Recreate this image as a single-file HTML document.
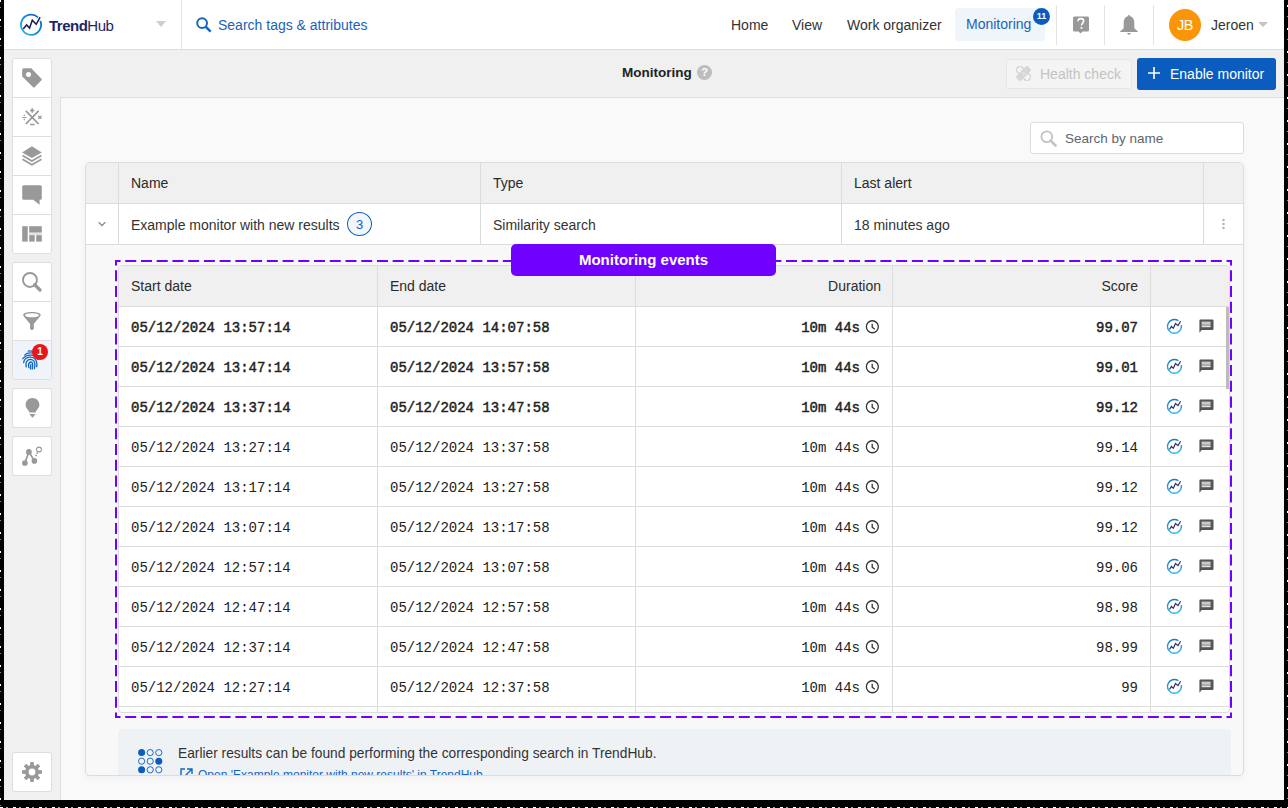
<!DOCTYPE html>
<html><head><meta charset="utf-8">
<style>
*{box-sizing:border-box;margin:0;padding:0}
html,body{width:1288px;height:808px;overflow:hidden;background:#000}
body{position:relative;font-family:"Liberation Sans",sans-serif;color:#333;font-size:14px}
.a{position:absolute}
#app{position:absolute;left:4px;top:0;width:1280px;height:800px;background:#f0f0f0;overflow:hidden}
#hdr{position:absolute;left:0;top:0;width:1280px;height:50px;background:#fff;border-bottom:1px solid #dcdcdc}
.t{position:absolute;white-space:nowrap;line-height:1}
.vsep{position:absolute;top:0;width:1px;background:#e3e3e3}
.sbox{position:absolute;left:8px;width:40px;background:#fff;border:1px solid #dedede;border-radius:3px;overflow:hidden}
.scell{position:relative;height:39px;border-top:1px solid #dedede}
.scell:first-child{border-top:none;height:38px}
.scell svg{position:absolute;left:9px;top:9px}
#content{position:absolute;left:56px;top:97px;width:1230px;height:710px;background:#f9f9f9;border-left:1px solid #dedede;border-top:1px solid #dedede}
#card{position:absolute;left:81px;top:162px;width:1159px;height:614px;background:#f8f8f8;box-shadow:0 2px 6px rgba(0,0,0,0.04);border:1px solid #dcdcdc;border-radius:5px;overflow:hidden}
.mono{font-family:"Liberation Mono",monospace}
</style></head><body>
<div class="a" style="left:0;top:0;width:1px;height:808px;background:repeating-linear-gradient(180deg,#fff 0 2px,#000 2px 7px,#888 7px 8px,#000 8px 19px)"></div>
<div class="a" style="left:1287px;top:0;width:1px;height:808px;background:repeating-linear-gradient(180deg,#000 0 5px,#fff 5px 7px,#000 7px 16px,#999 16px 17px,#000 17px 23px)"></div>
<div class="a" style="left:0;top:807px;width:1288px;height:1px;background:repeating-linear-gradient(90deg,#fff 0 3px,#000 3px 6px,#aaa 6px 8px,#000 8px 13px)"></div>
<div id="app">
  <!-- header -->
  <div id="hdr">
    <svg class="a" style="left:15px;top:13px" width="24" height="24" viewBox="0 0 24 24">
      <defs><linearGradient id="lg" x1="1" y1="0" x2="0" y2="1"><stop offset="0" stop-color="#0a5cc0"/><stop offset="1" stop-color="#22b8ea"/></linearGradient></defs>
      <path d="M21.3 7.82A10.05 10.05 0 1 1 18.9 4.4" fill="none" stroke="url(#lg)" stroke-width="1.8"/>
      <path d="M4.2 15.9L7.6 11.9L10.55 15L13.3 7.2L17.2 11.3L21.1 4.2" fill="none" stroke="#1c1a5a" stroke-width="1.5" stroke-linejoin="miter"/>
    </svg>
    <div class="t" style="left:45px;top:18px;font-size:15px;color:#1e2466;letter-spacing:-0.5px"><b>Trend</b>Hub</div>
    <svg class="a" style="left:152px;top:21px" width="10" height="6"><path d="M0 0H10L5 6Z" fill="#cfcfcf"/></svg>
    <div class="vsep" style="left:177px;height:49px"></div>
    <svg class="a" style="left:192px;top:17px" width="16" height="16" viewBox="0 0 16 16"><circle cx="6.1" cy="6.1" r="4.9" fill="none" stroke="#1565c0" stroke-width="2"/><path d="M9.6 9.6L14.6 14.6" stroke="#1565c0" stroke-width="2.5"/></svg>
    <div class="t" style="left:214px;top:18px;color:#1a62b8">Search tags &amp; attributes</div>

    <div class="t" style="left:727px;top:18px;color:#333">Home</div>
    <div class="t" style="left:788px;top:18px;color:#333">View</div>
    <div class="t" style="left:843px;top:18px;color:#333">Work organizer</div>
    <div class="a" style="left:951px;top:8px;width:90px;height:33px;background:#f0f5fb;border-radius:4px"></div>
    <div class="t" style="left:962px;top:17px;color:#1a62b8">Monitoring</div>
    <div class="a" style="left:1029px;top:8px;width:17px;height:17px;border-radius:50%;background:#0b5cbf;color:#fff;font-size:9px;text-align:center;line-height:17px;font-weight:700">11</div>
    <div class="vsep" style="left:1052px;top:5px;height:40px"></div>
    <svg class="a" style="left:1069px;top:16px" width="16" height="19" viewBox="0 0 16 19"><path d="M1.5 0.6H14.5A1.5 1.5 0 0 1 16 2.1V13.9A1.5 1.5 0 0 1 14.5 15.4H9.5L7.5 17.5L5.5 15.4H1.5A1.5 1.5 0 0 1 0 13.9V2.1A1.5 1.5 0 0 1 1.5 0.6Z" fill="#999"/><path d="M5 5.3C5 3.6 6.2 2.6 7.8 2.6C9.4 2.6 10.7 3.6 10.7 5.1C10.7 6.9 8.5 7.2 8.5 9.4" fill="none" stroke="#fff" stroke-width="1.6"/><rect x="7.6" y="11" width="1.8" height="1.8" fill="#fff"/></svg>
    <div class="vsep" style="left:1100px;top:5px;height:40px"></div>
    <svg class="a" style="left:1116px;top:14px" width="18" height="22" viewBox="0 0 18 22"><path d="M9 0.9C9.6 0.9 10 1.5 10.2 2.3C13 3.1 14.3 5.4 14.3 8.5V14.3L17.9 17.5V17.9H0.1V17.5L3.7 14.3V8.5C3.7 5.4 5 3.1 7.8 2.3C8 1.5 8.4 0.9 9 0.9Z" fill="#999"/><path d="M6.8 19H11.2L9 21Z" fill="#999"/></svg>
    <div class="vsep" style="left:1149px;top:5px;height:40px"></div>
    <div class="a" style="left:1165px;top:9px;width:32px;height:32px;border-radius:50%;background:#f99507;color:#fff;font-size:14.5px;text-align:center;line-height:32px;letter-spacing:-0.5px">JB</div>
    <div class="t" style="left:1207px;top:18px;color:#333">Jeroen</div>
    <svg class="a" style="left:1254px;top:22px" width="10" height="5"><path d="M0 0H10L5 5Z" fill="#c4c4c4"/></svg>
  </div>

  <!-- subheader -->
  <div class="t" style="left:618px;top:66px;font-weight:700;color:#222;font-size:13.5px">Monitoring</div>
  <div class="a" style="left:693px;top:65px;width:15px;height:15px;border-radius:50%;background:#bdbdbd;color:#fff;font-size:11px;font-weight:700;text-align:center;line-height:15px">?</div>
  <div class="a" style="left:1002px;top:59px;width:126px;height:30px;background:#f4f4f4;border:1px solid #e6e6e6;border-radius:3px"></div>
  <svg class="a" style="left:1012px;top:66px" width="15" height="15" viewBox="0 0 15 15"><g fill="none" stroke="#d6d6d6" stroke-width="1.5"><rect x="4.2" y="-0.8" width="6.6" height="16.6" rx="2.2" transform="rotate(-45 7.5 7.5)"/></g><rect x="4.2" y="-0.8" width="6.6" height="16.6" rx="2.2" fill="#d6d6d6" transform="rotate(45 7.5 7.5)"/><g fill="#f2f2f2"><circle cx="6.3" cy="7.5" r=".55"/><circle cx="8.7" cy="7.5" r=".55"/><circle cx="7.5" cy="6.3" r=".55"/><circle cx="7.5" cy="8.7" r=".55"/></g></svg>
  <div class="t" style="left:1036px;top:67px;color:#c3c3c3">Health check</div>
  <div class="a" style="left:1133px;top:58px;width:139px;height:32px;background:#0b5cbf;border-radius:3px"></div>
  <svg class="a" style="left:1144px;top:67px" width="12" height="12"><path d="M6 0V12M0 6H12" stroke="#fff" stroke-width="1.6"/></svg>
  <div class="t" style="left:1166px;top:67px;color:#fff">Enable monitor</div>

  <!-- sidebar -->
  <div id="sidebar"><div class="sbox" style="top:58px;height:196px"><div class="scell" style=""><svg width="20" height="20" viewBox="0 0 20 20"><path fill="#999" d="M1.7 0.2H9.3L19.2 10.4A1.4 1.4 0 0 1 19.2 12.4L12.9 18.9A1.4 1.4 0 0 1 10.9 18.9L0.2 8.6V1.7A1.5 1.5 0 0 1 1.7 0.2Z"/><circle cx="6.5" cy="6.5" r="2.5" fill="#fff"/></svg></div><div class="scell" style=""><svg width="20" height="20" viewBox="0 0 20 20"><g stroke="#999" fill="none"><path d="M3.9 3.8L16.6 17M16.6 3.8L3.9 17" stroke-width="1.8"/><path d="M10.2 1.3V5.7M8 3.5H12.4" stroke-width="1.5"/><path d="M8.1 17.5H12.6" stroke-width="1.4"/><path d="M0.2 10.5H4.5" stroke-width="1.2"/><path d="M16.3 8.9L19.5 11.7M19.5 8.9L16.3 11.7" stroke-width="1.3"/></g><circle cx="2.3" cy="8.3" r=".8" fill="#999"/><circle cx="2.3" cy="12.6" r=".8" fill="#999"/></svg></div><div class="scell" style=""><svg width="20" height="20" viewBox="0 0 20 20"><path fill="#999" d="M9.9 0.2L19.8 6.5L9.9 12.1L0.1 6.5Z"/><path fill="none" stroke="#999" stroke-width="1.7" d="M0.6 9.4L9.9 14.9L19.4 9.4M0.5 13.3L9.9 18.8L19.5 13.3"/></svg></div><div class="scell" style=""><svg width="20" height="20" viewBox="0 0 20 20"><path fill="#999" d="M1.7 0.2H18.3A1.5 1.5 0 0 1 19.8 1.7V13.3A1.5 1.5 0 0 1 18.3 14.8H17.6V19.8L11.1 14.8H1.7A1.5 1.5 0 0 1 0.2 13.3V1.7A1.5 1.5 0 0 1 1.7 0.2Z"/></svg></div><div class="scell" style=""><svg width="20" height="20" viewBox="0 0 20 20"><g fill="#999"><rect x="0.2" y="2.2" width="5.5" height="15.4"/><rect x="7.2" y="2.2" width="12.6" height="6.5"/><rect x="7.2" y="11.1" width="5.5" height="6.5"/><rect x="14.2" y="11.1" width="5.6" height="6.5"/></g><rect x="7.2" y="8.7" width="12.6" height="2.4" fill="#e3e3e3"/></svg></div></div><div class="sbox" style="top:262px;height:118px"><div class="scell" style=""><svg width="20" height="20" viewBox="0 0 20 20"><circle cx="7.95" cy="7.95" r="7" fill="none" stroke="#999" stroke-width="1.9"/><path d="M12.6 12.6L18 18" stroke="#999" stroke-width="3.2" stroke-linecap="round"/></svg></div><div class="scell" style=""><svg width="20" height="20" viewBox="0 0 20 20"><path fill="#999" d="M1.1 4C1.1 2.3 5.1 1 9.95 1S18.8 2.3 18.8 4C18.8 5 12.8 11.5 11.8 12.9V17.5C11.8 18.5 11 18.9 9.95 18.9S8.1 18.5 8.1 17.5V12.9C7.1 11.5 1.1 5 1.1 4Z"/><ellipse cx="9.95" cy="4.2" rx="7.05" ry="2.05" fill="#fff"/></svg></div><div class="scell" style="background:#eef4fa;"><svg width="20" height="20" viewBox="0 0 20 20"><g fill="none" stroke="#1565c0" stroke-width="1.3" stroke-linecap="round"><path d="M6.2 1.2C7.3 0.9 9 0.9 10.6 1.4"/><path d="M2.6 5.1C4.5 3.3 7.5 2.6 10.3 3.2"/><path d="M0.8 8.7C3 6 6.8 4.7 10.5 5.3C13.5 5.8 15.2 7.8 15.8 9.5"/><path d="M1.6 12.5C2.2 9.5 4.5 7.3 7.8 7.1C11.4 6.9 14.2 9.3 14.8 13C15 14.5 14.9 15.7 14.7 16.6"/><path d="M4.3 16.8C3.7 14.3 4 11.7 5.8 10.3C8 8.6 11.6 9.3 12.6 12.4C13.2 14.3 12.8 17 12.4 18.6"/><path d="M6.9 17.6C6.3 15.5 6.5 13.5 7.6 12.5C8.8 11.5 10.3 12.1 10.6 13.8C10.9 15.5 10.6 17.4 10.2 19.2"/><path d="M8.8 14.5C8.8 16 8.7 17.5 8.4 18.8"/></g></svg></div></div><div class="a" style="left:28px;top:344px;width:16px;height:16px;border-radius:50%;background:#e8151b;color:#fff;font-size:10px;font-weight:700;text-align:center;line-height:16px">1</div><div class="sbox" style="top:388px;height:40px"><div class="scell" style=""><svg width="20" height="20" viewBox="0 0 20 20"><path fill="#999" d="M10.5 0.1C14.3 0.1 17.4 3 17.4 6.8C17.4 9.3 16 10.8 14.7 12.2C14 12.9 13.7 13.6 13.7 14.6H7.2C7.2 13.6 6.9 12.9 6.2 12.2C4.9 10.8 3.6 9.3 3.6 6.8C3.6 3 6.7 0.1 10.5 0.1Z"/><path fill="#999" d="M7.2 16H13.7L10.45 19.7Z"/></svg></div></div><div class="sbox" style="top:436px;height:40px"><div class="scell" style=""><svg width="20" height="20" viewBox="0 0 20 20"><g stroke="#999" stroke-width="1.7" fill="none"><path d="M2.9 17L6.9 5.9L12.4 14.9"/><path d="M13.8 10.2L15.6 6.3" stroke-dasharray="1.4 1.3"/></g><circle cx="2.9" cy="17" r="2.85" fill="#999"/><circle cx="6.9" cy="5.9" r="2.9" fill="#999"/><circle cx="12.4" cy="14.9" r="2.8" fill="#999"/><circle cx="17" cy="3.5" r="2.4" fill="#fff" stroke="#999" stroke-width="1.1"/></svg></div></div><div class="sbox" style="top:752px;height:40px"><div class="scell" style=""><svg width="20" height="20" viewBox="0 0 20 20"><g fill="#999"><rect x="8.15" y="0.1" width="3.7" height="19.8"/><rect x="8.15" y="0.1" width="3.7" height="19.8" transform="rotate(45 10 10)"/><rect x="8.15" y="0.1" width="3.7" height="19.8" transform="rotate(90 10 10)"/><rect x="8.15" y="0.1" width="3.7" height="19.8" transform="rotate(135 10 10)"/><circle cx="10" cy="10" r="7"/></g><circle cx="10" cy="10" r="3.4" fill="#fff"/></svg></div></div></div>

  <!-- content -->
  <div id="content"></div>
  <div class="a" style="left:1026px;top:122px;width:214px;height:32px;background:#fff;border:1px solid #dcdcdc;border-radius:3px"></div>
  <svg class="a" style="left:1036px;top:130px" width="17" height="17" viewBox="0 0 17 17"><circle cx="6.8" cy="6.8" r="5.4" fill="none" stroke="#c2c2c2" stroke-width="1.8"/><path d="M10.8 10.8L15.5 15.5" stroke="#c2c2c2" stroke-width="2.6" stroke-linecap="round"/></svg>
  <div class="t" style="left:1061px;top:131.5px;color:#5d6570;font-size:13.5px">Search by name</div>
  <div id="card"><svg width="0" height="0" style="position:absolute"><defs><linearGradient id="cg" x1="0" y1="0" x2="0" y2="1"><stop offset="0" stop-color="#1b7bd0"/><stop offset="1" stop-color="#29b8ea"/></linearGradient></defs></svg><div class="a" style="left:0;top:0;width:1157px;height:41px;background:#f0f0f0;border-bottom:1px solid #dcdcdc"></div><div class="a" style="left:0;top:41px;width:1157px;height:41px;background:#fff;border-bottom:1px solid #dcdcdc"></div><div class="a" style="left:32px;top:0;width:1px;height:82px;background:#dcdcdc"></div><div class="a" style="left:394px;top:0;width:1px;height:82px;background:#dcdcdc"></div><div class="a" style="left:755px;top:0;width:1px;height:82px;background:#dcdcdc"></div><div class="a" style="left:1117px;top:0;width:1px;height:82px;background:#dcdcdc"></div><div class="t" style="left:45px;top:13px;color:#2b2b2b">Name</div><div class="t" style="left:407px;top:13px;color:#2b2b2b">Type</div><div class="t" style="left:768px;top:13px;color:#2b2b2b">Last alert</div><svg class="a" style="left:12px;top:58px" width="8" height="6"><path d="M0.7 1.2L4 4.5L7.3 1.2" fill="none" stroke="#8c8c8c" stroke-width="1.3"/></svg><div class="t" style="left:45px;top:54.5px;color:#333">Example monitor with new results</div><div class="a" style="left:261px;top:49px;width:25px;height:24px;border:1.5px solid #0e60c0;background:#f3f7fb;border-radius:50%;color:#0e60c0;font-size:13px;text-align:center;line-height:23px">3</div><div class="t" style="left:407px;top:54.5px;color:#333">Similarity search</div><div class="t" style="left:768px;top:54.5px;color:#333">18 minutes ago</div><svg class="a" style="left:1135px;top:55px" width="5" height="12"><g fill="#b5b5b5"><circle cx="2.5" cy="2" r="1.25"/><circle cx="2.5" cy="6" r="1.25"/><circle cx="2.5" cy="10" r="1.25"/></g></svg><div class="a" style="left:32px;top:102px;width:1112px;height:448px;background:#fff;border:1px solid #dcdcdc;border-radius:4px;overflow:hidden"><div class="a" style="left:0;top:0;width:1112px;height:41px;background:#f0f0f0;border-bottom:1px solid #dcdcdc"></div><div class="a" style="left:258px;top:0;width:1px;height:460px;background:#dcdcdc"></div><div class="a" style="left:516px;top:0;width:1px;height:460px;background:#dcdcdc"></div><div class="a" style="left:773px;top:0;width:1px;height:460px;background:#dcdcdc"></div><div class="a" style="left:1031px;top:0;width:1px;height:460px;background:#dcdcdc"></div><div class="t" style="left:12px;top:13px;color:#2b2b2b">Start date</div><div class="t" style="left:271px;top:13px;color:#2b2b2b">End date</div><div class="t" style="right:348px;top:13px;color:#2b2b2b">Duration</div><div class="t" style="right:91px;top:13px;color:#2b2b2b">Score</div><div class="a" style="left:0;top:80px;width:1112px;height:1px;background:#dcdcdc"></div><div class="t mono" style="left:12px;top:55px;-webkit-text-stroke:0.45px #222;color:#222">05/12/2024 13:57:14</div><div class="t mono" style="left:271px;top:55px;-webkit-text-stroke:0.45px #222;color:#222">05/12/2024 14:07:58</div><div class="t mono" style="right:369px;top:55px;-webkit-text-stroke:0.45px #222;color:#222">10m 44s</div><div class="a" style="left:746px;top:54px"><svg width="15" height="15" viewBox="0 0 15 15"><circle cx="7.35" cy="6.75" r="6" fill="none" stroke="#333" stroke-width="1.3"/><path d="M7.2 3.7V7.2L9.8 9.3" fill="none" stroke="#333" stroke-width="1.3"/></svg></div><div class="t mono" style="right:91px;top:55px;-webkit-text-stroke:0.45px #222;color:#222">99.07</div><div class="a" style="left:1047px;top:52px"><svg width="18" height="18" viewBox="0 0 18 18"><path d="M15.25 7.15A6.9 6.9 0 1 1 12.41 2.7" fill="none" stroke="url(#cg)" stroke-width="1.4"/><path d="M3.5 11.4L5.5 8.5L7.4 10.2L9.5 5.5L12 7.6L14.6 3.2" fill="none" stroke="#3a2f6b" stroke-width="1.2"/></svg></div><div class="a" style="left:1080px;top:53px"><svg width="15" height="14" viewBox="0 0 15 14"><path fill="#555" d="M1.4 0.4H13.5A1 1 0 0 1 14.5 1.4V10A1 1 0 0 1 13.5 11H2.7L0.4 13.8V1.4A1 1 0 0 1 1.4 0.4Z"/><rect x="2.6" y="2.6" width="9" height="3.2" fill="#c9c9c9"/><rect x="2.6" y="6.4" width="9" height="1.8" fill="#e4e4e4"/></svg></div><div class="a" style="left:0;top:120px;width:1112px;height:1px;background:#dcdcdc"></div><div class="t mono" style="left:12px;top:95px;-webkit-text-stroke:0.45px #222;color:#222">05/12/2024 13:47:14</div><div class="t mono" style="left:271px;top:95px;-webkit-text-stroke:0.45px #222;color:#222">05/12/2024 13:57:58</div><div class="t mono" style="right:369px;top:95px;-webkit-text-stroke:0.45px #222;color:#222">10m 44s</div><div class="a" style="left:746px;top:94px"><svg width="15" height="15" viewBox="0 0 15 15"><circle cx="7.35" cy="6.75" r="6" fill="none" stroke="#333" stroke-width="1.3"/><path d="M7.2 3.7V7.2L9.8 9.3" fill="none" stroke="#333" stroke-width="1.3"/></svg></div><div class="t mono" style="right:91px;top:95px;-webkit-text-stroke:0.45px #222;color:#222">99.01</div><div class="a" style="left:1047px;top:92px"><svg width="18" height="18" viewBox="0 0 18 18"><path d="M15.25 7.15A6.9 6.9 0 1 1 12.41 2.7" fill="none" stroke="url(#cg)" stroke-width="1.4"/><path d="M3.5 11.4L5.5 8.5L7.4 10.2L9.5 5.5L12 7.6L14.6 3.2" fill="none" stroke="#3a2f6b" stroke-width="1.2"/></svg></div><div class="a" style="left:1080px;top:93px"><svg width="15" height="14" viewBox="0 0 15 14"><path fill="#555" d="M1.4 0.4H13.5A1 1 0 0 1 14.5 1.4V10A1 1 0 0 1 13.5 11H2.7L0.4 13.8V1.4A1 1 0 0 1 1.4 0.4Z"/><rect x="2.6" y="2.6" width="9" height="3.2" fill="#c9c9c9"/><rect x="2.6" y="6.4" width="9" height="1.8" fill="#e4e4e4"/></svg></div><div class="a" style="left:0;top:160px;width:1112px;height:1px;background:#dcdcdc"></div><div class="t mono" style="left:12px;top:135px;-webkit-text-stroke:0.45px #222;color:#222">05/12/2024 13:37:14</div><div class="t mono" style="left:271px;top:135px;-webkit-text-stroke:0.45px #222;color:#222">05/12/2024 13:47:58</div><div class="t mono" style="right:369px;top:135px;-webkit-text-stroke:0.45px #222;color:#222">10m 44s</div><div class="a" style="left:746px;top:134px"><svg width="15" height="15" viewBox="0 0 15 15"><circle cx="7.35" cy="6.75" r="6" fill="none" stroke="#333" stroke-width="1.3"/><path d="M7.2 3.7V7.2L9.8 9.3" fill="none" stroke="#333" stroke-width="1.3"/></svg></div><div class="t mono" style="right:91px;top:135px;-webkit-text-stroke:0.45px #222;color:#222">99.12</div><div class="a" style="left:1047px;top:132px"><svg width="18" height="18" viewBox="0 0 18 18"><path d="M15.25 7.15A6.9 6.9 0 1 1 12.41 2.7" fill="none" stroke="url(#cg)" stroke-width="1.4"/><path d="M3.5 11.4L5.5 8.5L7.4 10.2L9.5 5.5L12 7.6L14.6 3.2" fill="none" stroke="#3a2f6b" stroke-width="1.2"/></svg></div><div class="a" style="left:1080px;top:133px"><svg width="15" height="14" viewBox="0 0 15 14"><path fill="#555" d="M1.4 0.4H13.5A1 1 0 0 1 14.5 1.4V10A1 1 0 0 1 13.5 11H2.7L0.4 13.8V1.4A1 1 0 0 1 1.4 0.4Z"/><rect x="2.6" y="2.6" width="9" height="3.2" fill="#c9c9c9"/><rect x="2.6" y="6.4" width="9" height="1.8" fill="#e4e4e4"/></svg></div><div class="a" style="left:0;top:200px;width:1112px;height:1px;background:#dcdcdc"></div><div class="t mono" style="left:12px;top:175px;color:#222">05/12/2024 13:27:14</div><div class="t mono" style="left:271px;top:175px;color:#222">05/12/2024 13:37:58</div><div class="t mono" style="right:369px;top:175px;color:#222">10m 44s</div><div class="a" style="left:746px;top:174px"><svg width="15" height="15" viewBox="0 0 15 15"><circle cx="7.35" cy="6.75" r="6" fill="none" stroke="#333" stroke-width="1.3"/><path d="M7.2 3.7V7.2L9.8 9.3" fill="none" stroke="#333" stroke-width="1.3"/></svg></div><div class="t mono" style="right:91px;top:175px;color:#222">99.14</div><div class="a" style="left:1047px;top:172px"><svg width="18" height="18" viewBox="0 0 18 18"><path d="M15.25 7.15A6.9 6.9 0 1 1 12.41 2.7" fill="none" stroke="url(#cg)" stroke-width="1.4"/><path d="M3.5 11.4L5.5 8.5L7.4 10.2L9.5 5.5L12 7.6L14.6 3.2" fill="none" stroke="#3a2f6b" stroke-width="1.2"/></svg></div><div class="a" style="left:1080px;top:173px"><svg width="15" height="14" viewBox="0 0 15 14"><path fill="#555" d="M1.4 0.4H13.5A1 1 0 0 1 14.5 1.4V10A1 1 0 0 1 13.5 11H2.7L0.4 13.8V1.4A1 1 0 0 1 1.4 0.4Z"/><rect x="2.6" y="2.6" width="9" height="3.2" fill="#c9c9c9"/><rect x="2.6" y="6.4" width="9" height="1.8" fill="#e4e4e4"/></svg></div><div class="a" style="left:0;top:240px;width:1112px;height:1px;background:#dcdcdc"></div><div class="t mono" style="left:12px;top:215px;color:#222">05/12/2024 13:17:14</div><div class="t mono" style="left:271px;top:215px;color:#222">05/12/2024 13:27:58</div><div class="t mono" style="right:369px;top:215px;color:#222">10m 44s</div><div class="a" style="left:746px;top:214px"><svg width="15" height="15" viewBox="0 0 15 15"><circle cx="7.35" cy="6.75" r="6" fill="none" stroke="#333" stroke-width="1.3"/><path d="M7.2 3.7V7.2L9.8 9.3" fill="none" stroke="#333" stroke-width="1.3"/></svg></div><div class="t mono" style="right:91px;top:215px;color:#222">99.12</div><div class="a" style="left:1047px;top:212px"><svg width="18" height="18" viewBox="0 0 18 18"><path d="M15.25 7.15A6.9 6.9 0 1 1 12.41 2.7" fill="none" stroke="url(#cg)" stroke-width="1.4"/><path d="M3.5 11.4L5.5 8.5L7.4 10.2L9.5 5.5L12 7.6L14.6 3.2" fill="none" stroke="#3a2f6b" stroke-width="1.2"/></svg></div><div class="a" style="left:1080px;top:213px"><svg width="15" height="14" viewBox="0 0 15 14"><path fill="#555" d="M1.4 0.4H13.5A1 1 0 0 1 14.5 1.4V10A1 1 0 0 1 13.5 11H2.7L0.4 13.8V1.4A1 1 0 0 1 1.4 0.4Z"/><rect x="2.6" y="2.6" width="9" height="3.2" fill="#c9c9c9"/><rect x="2.6" y="6.4" width="9" height="1.8" fill="#e4e4e4"/></svg></div><div class="a" style="left:0;top:280px;width:1112px;height:1px;background:#dcdcdc"></div><div class="t mono" style="left:12px;top:255px;color:#222">05/12/2024 13:07:14</div><div class="t mono" style="left:271px;top:255px;color:#222">05/12/2024 13:17:58</div><div class="t mono" style="right:369px;top:255px;color:#222">10m 44s</div><div class="a" style="left:746px;top:254px"><svg width="15" height="15" viewBox="0 0 15 15"><circle cx="7.35" cy="6.75" r="6" fill="none" stroke="#333" stroke-width="1.3"/><path d="M7.2 3.7V7.2L9.8 9.3" fill="none" stroke="#333" stroke-width="1.3"/></svg></div><div class="t mono" style="right:91px;top:255px;color:#222">99.12</div><div class="a" style="left:1047px;top:252px"><svg width="18" height="18" viewBox="0 0 18 18"><path d="M15.25 7.15A6.9 6.9 0 1 1 12.41 2.7" fill="none" stroke="url(#cg)" stroke-width="1.4"/><path d="M3.5 11.4L5.5 8.5L7.4 10.2L9.5 5.5L12 7.6L14.6 3.2" fill="none" stroke="#3a2f6b" stroke-width="1.2"/></svg></div><div class="a" style="left:1080px;top:253px"><svg width="15" height="14" viewBox="0 0 15 14"><path fill="#555" d="M1.4 0.4H13.5A1 1 0 0 1 14.5 1.4V10A1 1 0 0 1 13.5 11H2.7L0.4 13.8V1.4A1 1 0 0 1 1.4 0.4Z"/><rect x="2.6" y="2.6" width="9" height="3.2" fill="#c9c9c9"/><rect x="2.6" y="6.4" width="9" height="1.8" fill="#e4e4e4"/></svg></div><div class="a" style="left:0;top:320px;width:1112px;height:1px;background:#dcdcdc"></div><div class="t mono" style="left:12px;top:295px;color:#222">05/12/2024 12:57:14</div><div class="t mono" style="left:271px;top:295px;color:#222">05/12/2024 13:07:58</div><div class="t mono" style="right:369px;top:295px;color:#222">10m 44s</div><div class="a" style="left:746px;top:294px"><svg width="15" height="15" viewBox="0 0 15 15"><circle cx="7.35" cy="6.75" r="6" fill="none" stroke="#333" stroke-width="1.3"/><path d="M7.2 3.7V7.2L9.8 9.3" fill="none" stroke="#333" stroke-width="1.3"/></svg></div><div class="t mono" style="right:91px;top:295px;color:#222">99.06</div><div class="a" style="left:1047px;top:292px"><svg width="18" height="18" viewBox="0 0 18 18"><path d="M15.25 7.15A6.9 6.9 0 1 1 12.41 2.7" fill="none" stroke="url(#cg)" stroke-width="1.4"/><path d="M3.5 11.4L5.5 8.5L7.4 10.2L9.5 5.5L12 7.6L14.6 3.2" fill="none" stroke="#3a2f6b" stroke-width="1.2"/></svg></div><div class="a" style="left:1080px;top:293px"><svg width="15" height="14" viewBox="0 0 15 14"><path fill="#555" d="M1.4 0.4H13.5A1 1 0 0 1 14.5 1.4V10A1 1 0 0 1 13.5 11H2.7L0.4 13.8V1.4A1 1 0 0 1 1.4 0.4Z"/><rect x="2.6" y="2.6" width="9" height="3.2" fill="#c9c9c9"/><rect x="2.6" y="6.4" width="9" height="1.8" fill="#e4e4e4"/></svg></div><div class="a" style="left:0;top:360px;width:1112px;height:1px;background:#dcdcdc"></div><div class="t mono" style="left:12px;top:335px;color:#222">05/12/2024 12:47:14</div><div class="t mono" style="left:271px;top:335px;color:#222">05/12/2024 12:57:58</div><div class="t mono" style="right:369px;top:335px;color:#222">10m 44s</div><div class="a" style="left:746px;top:334px"><svg width="15" height="15" viewBox="0 0 15 15"><circle cx="7.35" cy="6.75" r="6" fill="none" stroke="#333" stroke-width="1.3"/><path d="M7.2 3.7V7.2L9.8 9.3" fill="none" stroke="#333" stroke-width="1.3"/></svg></div><div class="t mono" style="right:91px;top:335px;color:#222">98.98</div><div class="a" style="left:1047px;top:332px"><svg width="18" height="18" viewBox="0 0 18 18"><path d="M15.25 7.15A6.9 6.9 0 1 1 12.41 2.7" fill="none" stroke="url(#cg)" stroke-width="1.4"/><path d="M3.5 11.4L5.5 8.5L7.4 10.2L9.5 5.5L12 7.6L14.6 3.2" fill="none" stroke="#3a2f6b" stroke-width="1.2"/></svg></div><div class="a" style="left:1080px;top:333px"><svg width="15" height="14" viewBox="0 0 15 14"><path fill="#555" d="M1.4 0.4H13.5A1 1 0 0 1 14.5 1.4V10A1 1 0 0 1 13.5 11H2.7L0.4 13.8V1.4A1 1 0 0 1 1.4 0.4Z"/><rect x="2.6" y="2.6" width="9" height="3.2" fill="#c9c9c9"/><rect x="2.6" y="6.4" width="9" height="1.8" fill="#e4e4e4"/></svg></div><div class="a" style="left:0;top:400px;width:1112px;height:1px;background:#dcdcdc"></div><div class="t mono" style="left:12px;top:375px;color:#222">05/12/2024 12:37:14</div><div class="t mono" style="left:271px;top:375px;color:#222">05/12/2024 12:47:58</div><div class="t mono" style="right:369px;top:375px;color:#222">10m 44s</div><div class="a" style="left:746px;top:374px"><svg width="15" height="15" viewBox="0 0 15 15"><circle cx="7.35" cy="6.75" r="6" fill="none" stroke="#333" stroke-width="1.3"/><path d="M7.2 3.7V7.2L9.8 9.3" fill="none" stroke="#333" stroke-width="1.3"/></svg></div><div class="t mono" style="right:91px;top:375px;color:#222">98.99</div><div class="a" style="left:1047px;top:372px"><svg width="18" height="18" viewBox="0 0 18 18"><path d="M15.25 7.15A6.9 6.9 0 1 1 12.41 2.7" fill="none" stroke="url(#cg)" stroke-width="1.4"/><path d="M3.5 11.4L5.5 8.5L7.4 10.2L9.5 5.5L12 7.6L14.6 3.2" fill="none" stroke="#3a2f6b" stroke-width="1.2"/></svg></div><div class="a" style="left:1080px;top:373px"><svg width="15" height="14" viewBox="0 0 15 14"><path fill="#555" d="M1.4 0.4H13.5A1 1 0 0 1 14.5 1.4V10A1 1 0 0 1 13.5 11H2.7L0.4 13.8V1.4A1 1 0 0 1 1.4 0.4Z"/><rect x="2.6" y="2.6" width="9" height="3.2" fill="#c9c9c9"/><rect x="2.6" y="6.4" width="9" height="1.8" fill="#e4e4e4"/></svg></div><div class="a" style="left:0;top:440px;width:1112px;height:1px;background:#dcdcdc"></div><div class="t mono" style="left:12px;top:415px;color:#222">05/12/2024 12:27:14</div><div class="t mono" style="left:271px;top:415px;color:#222">05/12/2024 12:37:58</div><div class="t mono" style="right:369px;top:415px;color:#222">10m 44s</div><div class="a" style="left:746px;top:414px"><svg width="15" height="15" viewBox="0 0 15 15"><circle cx="7.35" cy="6.75" r="6" fill="none" stroke="#333" stroke-width="1.3"/><path d="M7.2 3.7V7.2L9.8 9.3" fill="none" stroke="#333" stroke-width="1.3"/></svg></div><div class="t mono" style="right:91px;top:415px;color:#222">99</div><div class="a" style="left:1047px;top:412px"><svg width="18" height="18" viewBox="0 0 18 18"><path d="M15.25 7.15A6.9 6.9 0 1 1 12.41 2.7" fill="none" stroke="url(#cg)" stroke-width="1.4"/><path d="M3.5 11.4L5.5 8.5L7.4 10.2L9.5 5.5L12 7.6L14.6 3.2" fill="none" stroke="#3a2f6b" stroke-width="1.2"/></svg></div><div class="a" style="left:1080px;top:413px"><svg width="15" height="14" viewBox="0 0 15 14"><path fill="#555" d="M1.4 0.4H13.5A1 1 0 0 1 14.5 1.4V10A1 1 0 0 1 13.5 11H2.7L0.4 13.8V1.4A1 1 0 0 1 1.4 0.4Z"/><rect x="2.6" y="2.6" width="9" height="3.2" fill="#c9c9c9"/><rect x="2.6" y="6.4" width="9" height="1.8" fill="#e4e4e4"/></svg></div><div class="a" style="left:0;top:480px;width:1112px;height:1px;background:#dcdcdc"></div><div class="t mono" style="left:12px;top:455px;color:#222">05/12/2024 12:17:14</div><div class="t mono" style="left:271px;top:455px;color:#222">05/12/2024 12:27:58</div><div class="t mono" style="right:369px;top:455px;color:#222">10m 44s</div><div class="a" style="left:746px;top:454px"><svg width="15" height="15" viewBox="0 0 15 15"><circle cx="7.35" cy="6.75" r="6" fill="none" stroke="#333" stroke-width="1.3"/><path d="M7.2 3.7V7.2L9.8 9.3" fill="none" stroke="#333" stroke-width="1.3"/></svg></div><div class="t mono" style="right:91px;top:455px;color:#222">99.02</div><div class="a" style="left:1047px;top:452px"><svg width="18" height="18" viewBox="0 0 18 18"><path d="M15.25 7.15A6.9 6.9 0 1 1 12.41 2.7" fill="none" stroke="url(#cg)" stroke-width="1.4"/><path d="M3.5 11.4L5.5 8.5L7.4 10.2L9.5 5.5L12 7.6L14.6 3.2" fill="none" stroke="#3a2f6b" stroke-width="1.2"/></svg></div><div class="a" style="left:1080px;top:453px"><svg width="15" height="14" viewBox="0 0 15 14"><path fill="#555" d="M1.4 0.4H13.5A1 1 0 0 1 14.5 1.4V10A1 1 0 0 1 13.5 11H2.7L0.4 13.8V1.4A1 1 0 0 1 1.4 0.4Z"/><rect x="2.6" y="2.6" width="9" height="3.2" fill="#c9c9c9"/><rect x="2.6" y="6.4" width="9" height="1.8" fill="#e4e4e4"/></svg></div><div class="a" style="left:1107px;top:41px;width:4px;height:82px;background:#bbb"></div></div><svg class="a" style="left:28px;top:96px" width="1120" height="461"><g fill="none" stroke="#7000ff" stroke-width="2"><path d="M1 2L1118 2" stroke-dasharray="11.013 4.720" stroke-dashoffset="5.506"/><path d="M1117 1L1117 459" stroke-dasharray="11.055 4.738" stroke-dashoffset="5.528"/><path d="M1118 458L1 458" stroke-dasharray="11.013 4.720" stroke-dashoffset="5.506"/><path d="M2 459L2 1" stroke-dasharray="11.055 4.738" stroke-dashoffset="5.528"/></g></svg><div class="a" style="left:425px;top:81px;width:265px;height:32px;background:#7000ff;border-radius:5px;color:#fff;font-weight:700;font-size:15px;text-align:center;line-height:32px">Monitoring events</div><div class="a" style="left:32px;top:566px;width:1113px;height:60px;background:#eff2f5;border-radius:4px;overflow:hidden"><div class="a" style="left:20px;top:20px"><svg width="25" height="25" viewBox="0 0 25 25"><circle cx="3.6" cy="3.6" r="3.5" fill="#0b5cbf"/><circle cx="12.2" cy="3.6" r="3.1" fill="none" stroke="#0b5cbf" stroke-width="0.9"/><circle cx="20.8" cy="3.6" r="3.1" fill="none" stroke="#0b5cbf" stroke-width="0.9"/><circle cx="3.6" cy="12.2" r="3.1" fill="none" stroke="#0b5cbf" stroke-width="0.9"/><circle cx="12.2" cy="12.2" r="3.1" fill="none" stroke="#0b5cbf" stroke-width="0.9"/><circle cx="20.8" cy="12.2" r="3.5" fill="#0b5cbf"/><circle cx="3.6" cy="20.8" r="3.5" fill="#0b5cbf"/><circle cx="12.2" cy="20.8" r="3.1" fill="none" stroke="#0b5cbf" stroke-width="0.9"/><circle cx="20.8" cy="20.8" r="3.1" fill="none" stroke="#0b5cbf" stroke-width="0.9"/></svg></div><div class="t" style="left:60px;top:18px;color:#333;font-size:13.75px">Earlier results can be found performing the corresponding search in TrendHub.</div><div class="a" style="left:62px;top:39px"><svg width="13" height="13" viewBox="0 0 13 13"><path d="M5 1H1V12H12V8" fill="none" stroke="#1565c0" stroke-width="1.4"/><path d="M7 1H12V6M12 1L5.5 7.5" fill="none" stroke="#1565c0" stroke-width="1.4"/></svg></div><div class="t" style="left:80px;top:40px;color:#1565c0;font-size:12px">Open 'Example monitor with new results' in TrendHub</div></div></div>
</div>
</body></html>
